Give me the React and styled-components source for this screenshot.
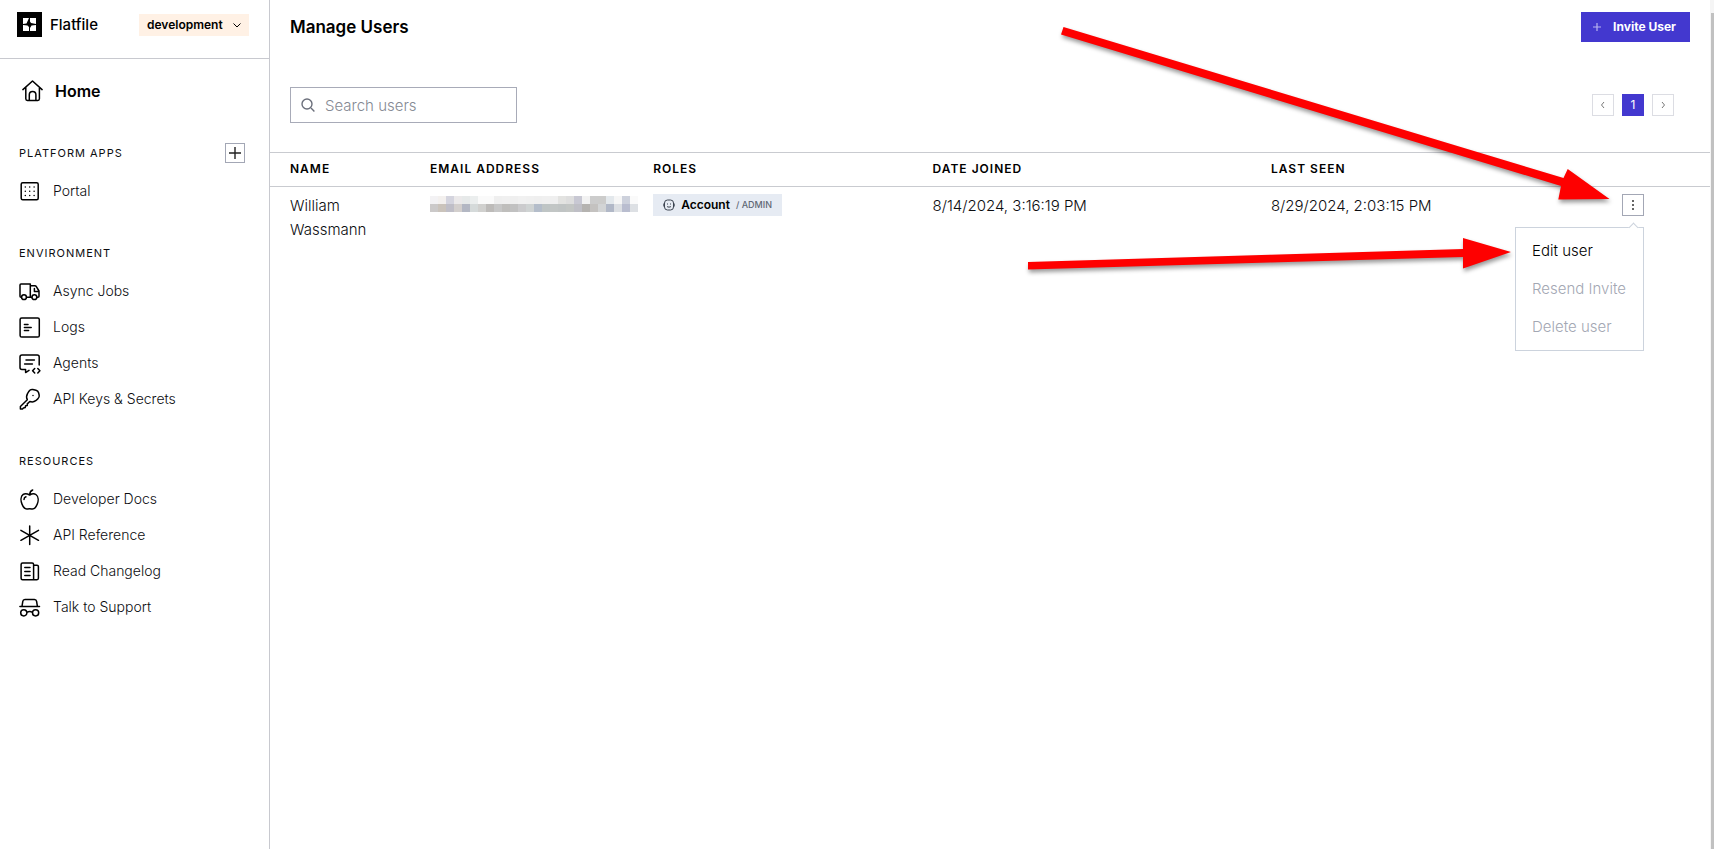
import styled, { createGlobalStyle } from "styled-components";

function App() {
  return (
    <Page>
      <GlobalStyle />
      <Sidebar>
        <Brand>
          <Logo />
          <BrandName>Flatfile</BrandName>
          <EnvironmentButton type="button">
            development
            <Chevron viewBox="0 0 8 8">
              <path d="M.5 2.500 4 6 7.500 2.500" />
            </Chevron>
          </EnvironmentButton>
        </Brand>
        <HomeLink href="#home">
          <Icon name="home" />
          Home
        </HomeLink>
        {sections.map((section) => (
          <Section key={section.title}>
            <SectionHead>
              <SectionTitle>{section.title}</SectionTitle>
              {section.canAdd && (
                <AddButton type="button" aria-label="Add app">
                  <svg width="18" height="18" viewBox="0 0 18 18">
                    <path d="M9 3v12M3 9h12" stroke="#222" strokeWidth="1.4" />
                  </svg>
                </AddButton>
              )}
            </SectionHead>
            {section.items.map((item) => (
              <NavLink key={item.label} href="#nav">
                <Icon name={item.icon} />
                {item.label}
              </NavLink>
            ))}
          </Section>
        ))}
      </Sidebar>
      <Main>
        <TopBar>
          <Title>Manage Users</Title>
          <InviteButton type="button">
            <svg width="10" height="10" viewBox="0 0 10 10">
              <path d="M5 1v8M1 5h8" stroke="#b9b4f0" strokeWidth="1.2" />
            </svg>
            Invite User
          </InviteButton>
        </TopBar>
        <Tools>
          <SearchBox>
            <SearchIcon viewBox="0 0 14 14">
              <circle cx="6" cy="6" r="5" />
              <path d="m10 10 3.4 3.4" />
            </SearchIcon>
            <SearchInput placeholder="Search users" aria-label="Search users" />
          </SearchBox>
          <Pagination>
            <PageButton type="button" aria-label="Previous page">
              <Chevron viewBox="0 0 8 8">
                <path d="M5 1 2.5 4 5 7" />
              </Chevron>
            </PageButton>
            <PageButton type="button" $active>
              1
            </PageButton>
            <PageButton type="button" aria-label="Next page">
              <Chevron viewBox="0 0 8 8">
                <path d="M3 1 5.5 4 3 7" />
              </Chevron>
            </PageButton>
          </Pagination>
        </Tools>
        <Table>
          <thead>
            <tr>
              <HeadCell $width="140px">Name</HeadCell>
              <HeadCell $width="15.5%">Email Address</HeadCell>
              <HeadCell $width="19.4%">Roles</HeadCell>
              <HeadCell $width="23.5%">Date Joined</HeadCell>
              <HeadCell>Last Seen</HeadCell>
              <HeadCell $width="108px" />
            </tr>
          </thead>
          <tbody>
            <tr>
              <Cell>William Wassmann</Cell>
              <Cell>
                <HiddenEmail />
              </Cell>
              <Cell>
                <Role>
                  <svg width="12" height="12" viewBox="0 0 12 12" fill="none" stroke="#3c4451">
                    <rect x="1.5" y="1" width="9" height="10" rx="3" />
                    <path d="M.8 4.500v3M11.200 4.500v3M4 5h1M7 5h1M4 7.500c1 .8 3 .8 4 0" />
                  </svg>
                  Account
                  <RoleLevel>/ ADMIN</RoleLevel>
                </Role>
              </Cell>
              <Cell>8/14/2024, 3:16:19 PM</Cell>
              <Cell>8/29/2024, 2:03:15 PM</Cell>
              <Cell>
                <Actions>
                  <MenuButton type="button" aria-label="User actions">
                    <svg width="10" height="10" viewBox="0 0 10 10" fill="#333">
                      <circle cx="5" cy="1" r="1" />
                      <circle cx="5" cy="5" r="1" />
                      <circle cx="5" cy="9" r="1" />
                    </svg>
                  </MenuButton>
                  <Menu>
                    <MenuItem type="button">Edit user</MenuItem>
                    <MenuItem type="button" disabled>
                      Resend Invite
                    </MenuItem>
                    <MenuItem type="button" disabled>
                      Delete user
                    </MenuItem>
                  </Menu>
                </Actions>
              </Cell>
            </tr>
          </tbody>
        </Table>
      </Main>
      <Gutter>
        <Thumb />
      </Gutter>
      <Arrows viewBox="0 0 714 300">
        <path d="M63.5 27 563.500 178 567.700 169 609.500 199 558.300 199.500 561 186 61 34.500Z" />
        <path d="M28 262 463 249 463 238 511 252 463 268.500 463 257 28 269.500Z" />
      </Arrows>
    </Page>
  );
}

const sections = [
  {
    title: "Platform Apps",
    canAdd: true,
    items: [{ label: "Portal", icon: "portal" }],
  },
  {
    title: "Environment",
    items: [
      { label: "Async Jobs", icon: "truck" },
      { label: "Logs", icon: "logs" },
      { label: "Agents", icon: "agents" },
      { label: "API Keys & Secrets", icon: "key" },
    ],
  },
  {
    title: "Resources",
    items: [
      { label: "Developer Docs", icon: "apple" },
      { label: "API Reference", icon: "asterisk" },
      { label: "Read Changelog", icon: "news" },
      { label: "Talk to Support", icon: "support" },
    ],
  },
];

const icons = {
  home: "M.9 9.6 10.5 1l9.6 8.6M3.8 7.2v11.6a1.6 1.6 0 0 0 1.6 1.6h10.4a1.6 1.6 0 0 0 1.6-1.6V7.2M7.3 20.4v-5.6a3.3 3.3 0 0 1 6.6 0v5.6",
  portal:
    "M3.7 2.8h14a1.5 1.5 0 0 1 1.5 1.5v14a1.5 1.5 0 0 1-1.5 1.5h-14a1.5 1.5 0 0 1-1.5-1.5v-14a1.5 1.5 0 0 1 1.5-1.5ZM6.3 7h.01M10.7 7h.01M15.1 7h.01M6.3 11.3h.01M10.7 11.3h.01M15.1 11.3h.01M6.3 15.6h.01M10.7 15.6h.01M15.1 15.6h.01",
  truck:
    "M2.6 17.2H2a1 1 0 0 1-1-1V5a1 1 0 0 1 1-1h9.3v13.2H7.4M11.3 5.8h4.5a2 2 0 0 1 1.7 1L20 11v5.2a1 1 0 0 1-1 1h-1.2M11.3 17.2h1.6M20 11.4h-4.6V8.6M7.4 17.2a2.4 2.4 0 1 1-4.8 0 2.4 2.4 0 0 1 4.8 0M17.8 17.2a2.4 2.4 0 1 1-4.8 0 2.4 2.4 0 0 1 4.8 0",
  logs: "M2.7 2h16a1.6 1.6 0 0 1 1.6 1.6v15.8a1.6 1.6 0 0 1-1.6 1.6h-16a1.6 1.6 0 0 1-1.6-1.6V3.6A1.6 1.6 0 0 1 2.7 2ZM5.4 8.5H9M5.4 11.5h6.8M5.4 14.5h4.2",
  agents:
    "M20.2 13V5a2 2 0 0 0-2-2H3a2 2 0 0 0-2 2v10.6a2 2 0 0 0 2 2h3.6v3L10 18.4M7 8h8.4M5.6 12h7.8M15.7 16.6l-2.1 2.2 2.1 2.2M18.8 16.6l2.1 2.2-2.1 2.2",
  key: "M8.3 11.7C7.2 9.600 7.4 7.600 8.500 5.600L10 3.200C10.900 1.900 12.300 1.300 13.800 1.600L17 2.300C18.300 2.600 19.200 3.500 19.600 4.800L20.200 7.200C20.500 8.800 19.900 10 18.800 10.900L16.700 12.700C14.800 14.200 12.400 14 10.800 13.500L8.300 15.900V17.500L6.600 17.700 6.200 19.600 4.400 20 3.500 21H1.400V18.500ZM14 7.500h.01",
  apple:
    "M10.7 7C8.6 5.8 6.3 5 4.2 6.4 1.5 8.3 1.6 12.7 3 16.1c1.2 3 3.3 5.3 5.5 4.9 1.5-.3 2.7-.3 4.2 0 2.3.4 4.3-1.7 5.5-4.7 1.4-3.5 1.4-7.9-1.3-9.8-2.1-1.4-4.3-.7-6.2.5ZM10.7 7c0-2.6 1.1-4.3 3-5M5 11.5c0-1.4.7-2.4 1.9-2.7",
  asterisk: "M10.7 2v18.6M1.9 6.3l17.6 10M19.5 6.3l-17.6 10",
  news: "M3.6 3h9.5a1.5 1.5 0 0 1 1.5 1.5v15.2H3.6a1.5 1.5 0 0 1-1.5-1.5V4.5A1.5 1.5 0 0 1 3.6 3ZM14.6 5.2H18a1.4 1.4 0 0 1 1.4 1.4v11.7a1.4 1.4 0 0 1-1.4 1.4h-3.4M5.8 7.4H11M5.800 11.4H11M5.8 15.4H11",
  support:
    "M.9 10.6h19.6M3 10.3l.8-5A2.2 2.2 0 0 1 6 3.4h9.4a2.2 2.2 0 0 1 2.2 1.9l.8 5M7.9 16.8a3.1 3.1 0 1 1-6.2 0 3.1 3.1 0 0 1 6.2 0M19.7 16.8a3.1 3.1 0 1 1-6.2 0 3.1 3.1 0 0 1 6.2 0M7.9 16.5c1.6-1.2 4-1.2 5.6 0",
};

function Icon({ name }) {
  return (
    <IconSvg viewBox="0 0 22 22">
      <path d={icons[name]} />
    </IconSvg>
  );
}

function Logo() {
  return (
    <svg width="25" height="25" viewBox="0 0 25 25">
      <rect width="25" height="25" />
      <path fill="#fff" d="M6 6h13v13H6Z" />
      <path d="M12 6h1v3.500L14 11 19 12v1L14.500 13.500 13 16v3h-1v-4L10.500 13.500 6 13v-1L9.500 11.500Z" />
    </svg>
  );
}

const blocks = [
  "#f3f2f4 #f3f0ee #d4d4de #ebe9ea #e6e9e9 #ebeeee #fafafa #fafafa #efefef #f0f0f0 #efefef #f1f1f1 #f0f0f0 #efefef #f0f0f0 #efefef #e3e3e1 #dedede #c8c8d3 #f2f2f2 #cccccc #cccccb #e3e8ec #f6f6f6 #cdd1dc #fafafa",
  "#cbc9c9 #cac3bb #bfbec7 #d3cfcd #b3b7c3 #d5dada #d0d0ce #bdbbb9 #c7c7c7 #bfbebc #c1c1c1 #cbcbcd #cfd3d3 #b4bdca #bfc5c5 #c2c6c5 #c0c4c4 #c3c6c4 #bfbfc6 #b5b3b0 #c4c2c0 #d2d4d5 #b1b8c7 #dcdfe3 #b9bdcf #dde0e4",
].map((row) => row.split(" "));

function HiddenEmail() {
  return (
    <Mosaic role="img" aria-label="Hidden email" viewBox="0 0 208 16">
      {blocks.map((row, y) =>
        row.map((fill, x) => (
          <rect key={x + "-" + y} x={x * 8} y={y * 8} width="8" height="8" fill={fill} />
        ))
      )}
    </Mosaic>
  );
}

const GlobalStyle = createGlobalStyle`
  * {
    box-sizing: border-box;
  }
  body {
    margin: 0;
    background: #fff;
    color: #0c0d10;
    font-family: Inter, "Liberation Sans", sans-serif;
    font-size: 15px;
    font-weight: 300;
    line-height: 24px;
  }
  button, input {
    font: inherit;
    color: inherit;
  }
  a {
    color: inherit;
    text-decoration: none;
  }
`;

const Page = styled.div`
  display: flex;
  min-height: 100vh;
  position: relative;
`;

const Sidebar = styled.nav`
  flex: 0 0 270px;
  border-right: 1px solid #c8c9cf;
`;

const Brand = styled.div`
  display: flex;
  align-items: center;
  height: 59px;
  padding: 0 20px 9px 17px;
  border-bottom: 1px solid #c8c9cf;
`;

const BrandName = styled.span`
  margin-left: 8px;
  font-weight: 500;
  font-size: 15px;
  color: #000;
`;

const EnvironmentButton = styled.button`
  display: flex;
  align-items: center;
  justify-content: space-between;
  width: 110px;
  height: 22px;
  margin-left: auto;
  padding: 0 8px;
  border: 0;
  background: #fff1e5;
  font-size: 12px;
  font-weight: 600;
  color: #000;
`;

const Chevron = styled.svg`
  width: 8px;
  height: 8px;
  fill: none;
  stroke: currentColor;
`;

const IconSvg = styled.svg`
  flex: none;
  width: 22px;
  height: 22px;
  fill: none;
  stroke: #000;
  stroke-width: 1.5;
  stroke-linecap: round;
  stroke-linejoin: round;
`;

const HomeLink = styled.a`
  display: flex;
  align-items: center;
  gap: 11px;
  padding: 20px 22px 26px;
  font-size: 16px;
  font-weight: 600;
  color: #000;
`;

const Section = styled.section`
  padding: 14px 20px 20px 19px;
`;

const SectionHead = styled.div`
  display: flex;
  align-items: center;
  justify-content: space-between;
  height: 20px;
  margin-bottom: 10px;
  padding-right: 4px;
`;

const SectionTitle = styled.h2`
  margin: 0;
  font-size: 11px;
  font-weight: 400;
  letter-spacing: 1px;
  text-transform: uppercase;
`;

const AddButton = styled.button`
  display: grid;
  place-items: center;
  width: 20px;
  height: 20px;
  padding: 0;
  border: 1px solid #a3a7b5;
  background: #fff;
`;

const NavLink = styled.a`
  display: flex;
  align-items: center;
  gap: 12px;
  height: 36px;
  font-size: 14px;
`;

const Main = styled.main`
  flex: 1;
  min-width: 0;
`;

const TopBar = styled.header`
  display: flex;
  align-items: center;
  justify-content: space-between;
  padding: 12px 20px 0;
`;

const Title = styled.h1`
  margin: 0;
  font-size: 17px;
  font-weight: 600;
  color: #000;
`;

const InviteButton = styled.button`
  display: flex;
  align-items: center;
  gap: 11px;
  height: 30px;
  padding: 0 14px 0 11px;
  border: 0;
  background: #4338cf;
  font-size: 12px;
  font-weight: 700;
  color: #fff;
`;

const Tools = styled.div`
  display: flex;
  align-items: center;
  justify-content: space-between;
  padding: 45px 36px 29px 20px;
`;

const SearchBox = styled.label`
  display: flex;
  align-items: center;
  gap: 10px;
  width: 227px;
  height: 36px;
  padding: 0 10px;
  border: 1px solid #a8abb8;
`;

const SearchIcon = styled.svg`
  flex: none;
  width: 14px;
  height: 14px;
  fill: none;
  stroke: #6b6f7b;
  stroke-width: 1.4;
`;

const SearchInput = styled.input`
  flex: 1;
  min-width: 0;
  padding: 2px 0 0;
  border: 0;
  outline: 0;
  background: none;
  &::placeholder {
    color: #858993;
    opacity: 1;
  }
`;

const Pagination = styled.div`
  display: flex;
  gap: 8px;
`;

const PageButton = styled.button`
  display: grid;
  place-items: center;
  width: 22px;
  height: 22px;
  padding: 0;
  border: 1px solid ${(props) => (props.$active ? "#4338cf" : "#dcdde3")};
  background: ${(props) => (props.$active ? "#4338cf" : "#fff")};
  color: ${(props) => (props.$active ? "#fff" : "#777")};
  font-size: 12px;
  font-weight: 400;
  line-height: 20px;
`;

const Table = styled.table`
  width: 100%;
  table-layout: fixed;
  border-collapse: collapse;
`;

const HeadCell = styled.th`
  width: ${(props) => props.$width || "auto"};
  height: 34px;
  padding: 0 0 2px 20px;
  border-top: 1px solid #c9cbd0;
  border-bottom: 1px solid #c9cbd0;
  text-align: left;
  text-transform: uppercase;
  font-size: 12px;
  font-weight: 600;
  letter-spacing: 1px;
  color: #000;
`;

const Cell = styled.td`
  padding: 7px 0 8px 20px;
  vertical-align: top;
`;

const Mosaic = styled.svg`
  display: block;
  width: 208px;
  height: 16px;
  margin-top: 2px;
`;

const Role = styled.span`
  display: inline-flex;
  align-items: center;
  gap: 6px;
  height: 22px;
  padding: 0 10px;
  background: #e6ebf3;
  vertical-align: top;
  font-size: 12px;
  font-weight: 600;
  color: #000;
`;

const RoleLevel = styled.span`
  font-size: 9px;
  font-weight: 500;
  color: #616875;
`;

const Actions = styled.div`
  position: relative;
  width: 22px;
`;

const MenuButton = styled.button`
  display: grid;
  place-items: center;
  width: 22px;
  height: 22px;
  padding: 0;
  border: 1px solid #a3a7b5;
  background: #fff;
`;

const Menu = styled.div`
  position: absolute;
  top: 33px;
  right: 0;
  width: 129px;
  padding: 4px 0;
  border: 1px solid #ccd3dd;
  background: #fff;
  &::before {
    content: "";
    position: absolute;
    top: -4px;
    right: 6px;
    width: 6px;
    height: 6px;
    border: solid #ccd3dd;
    border-width: 1px 0 0 1px;
    background: #fff;
    transform: rotate(45deg);
  }
`;

const MenuItem = styled.button`
  display: block;
  width: 100%;
  height: 38px;
  padding: 0 16px;
  border: 0;
  background: none;
  text-align: left;
  white-space: nowrap;
  color: ${(props) => (props.disabled ? "#a3a7b3" : "#000")};
`;

const Gutter = styled.div`
  display: flex;
  flex: 0 0 4px;
  padding: 13px 0 0 1px;
  background: #f5f5f5;
`;

const Thumb = styled.div`
  flex: 1;
  background: #c1c1c1;
`;

const Arrows = styled.svg`
  position: absolute;
  top: 0;
  right: 0;
  width: 714px;
  height: 300px;
  fill: #fe0000;
  pointer-events: none;
  filter: drop-shadow(1px 3px 2px rgba(0, 0, 0, 0.4));
`;

export default App;
